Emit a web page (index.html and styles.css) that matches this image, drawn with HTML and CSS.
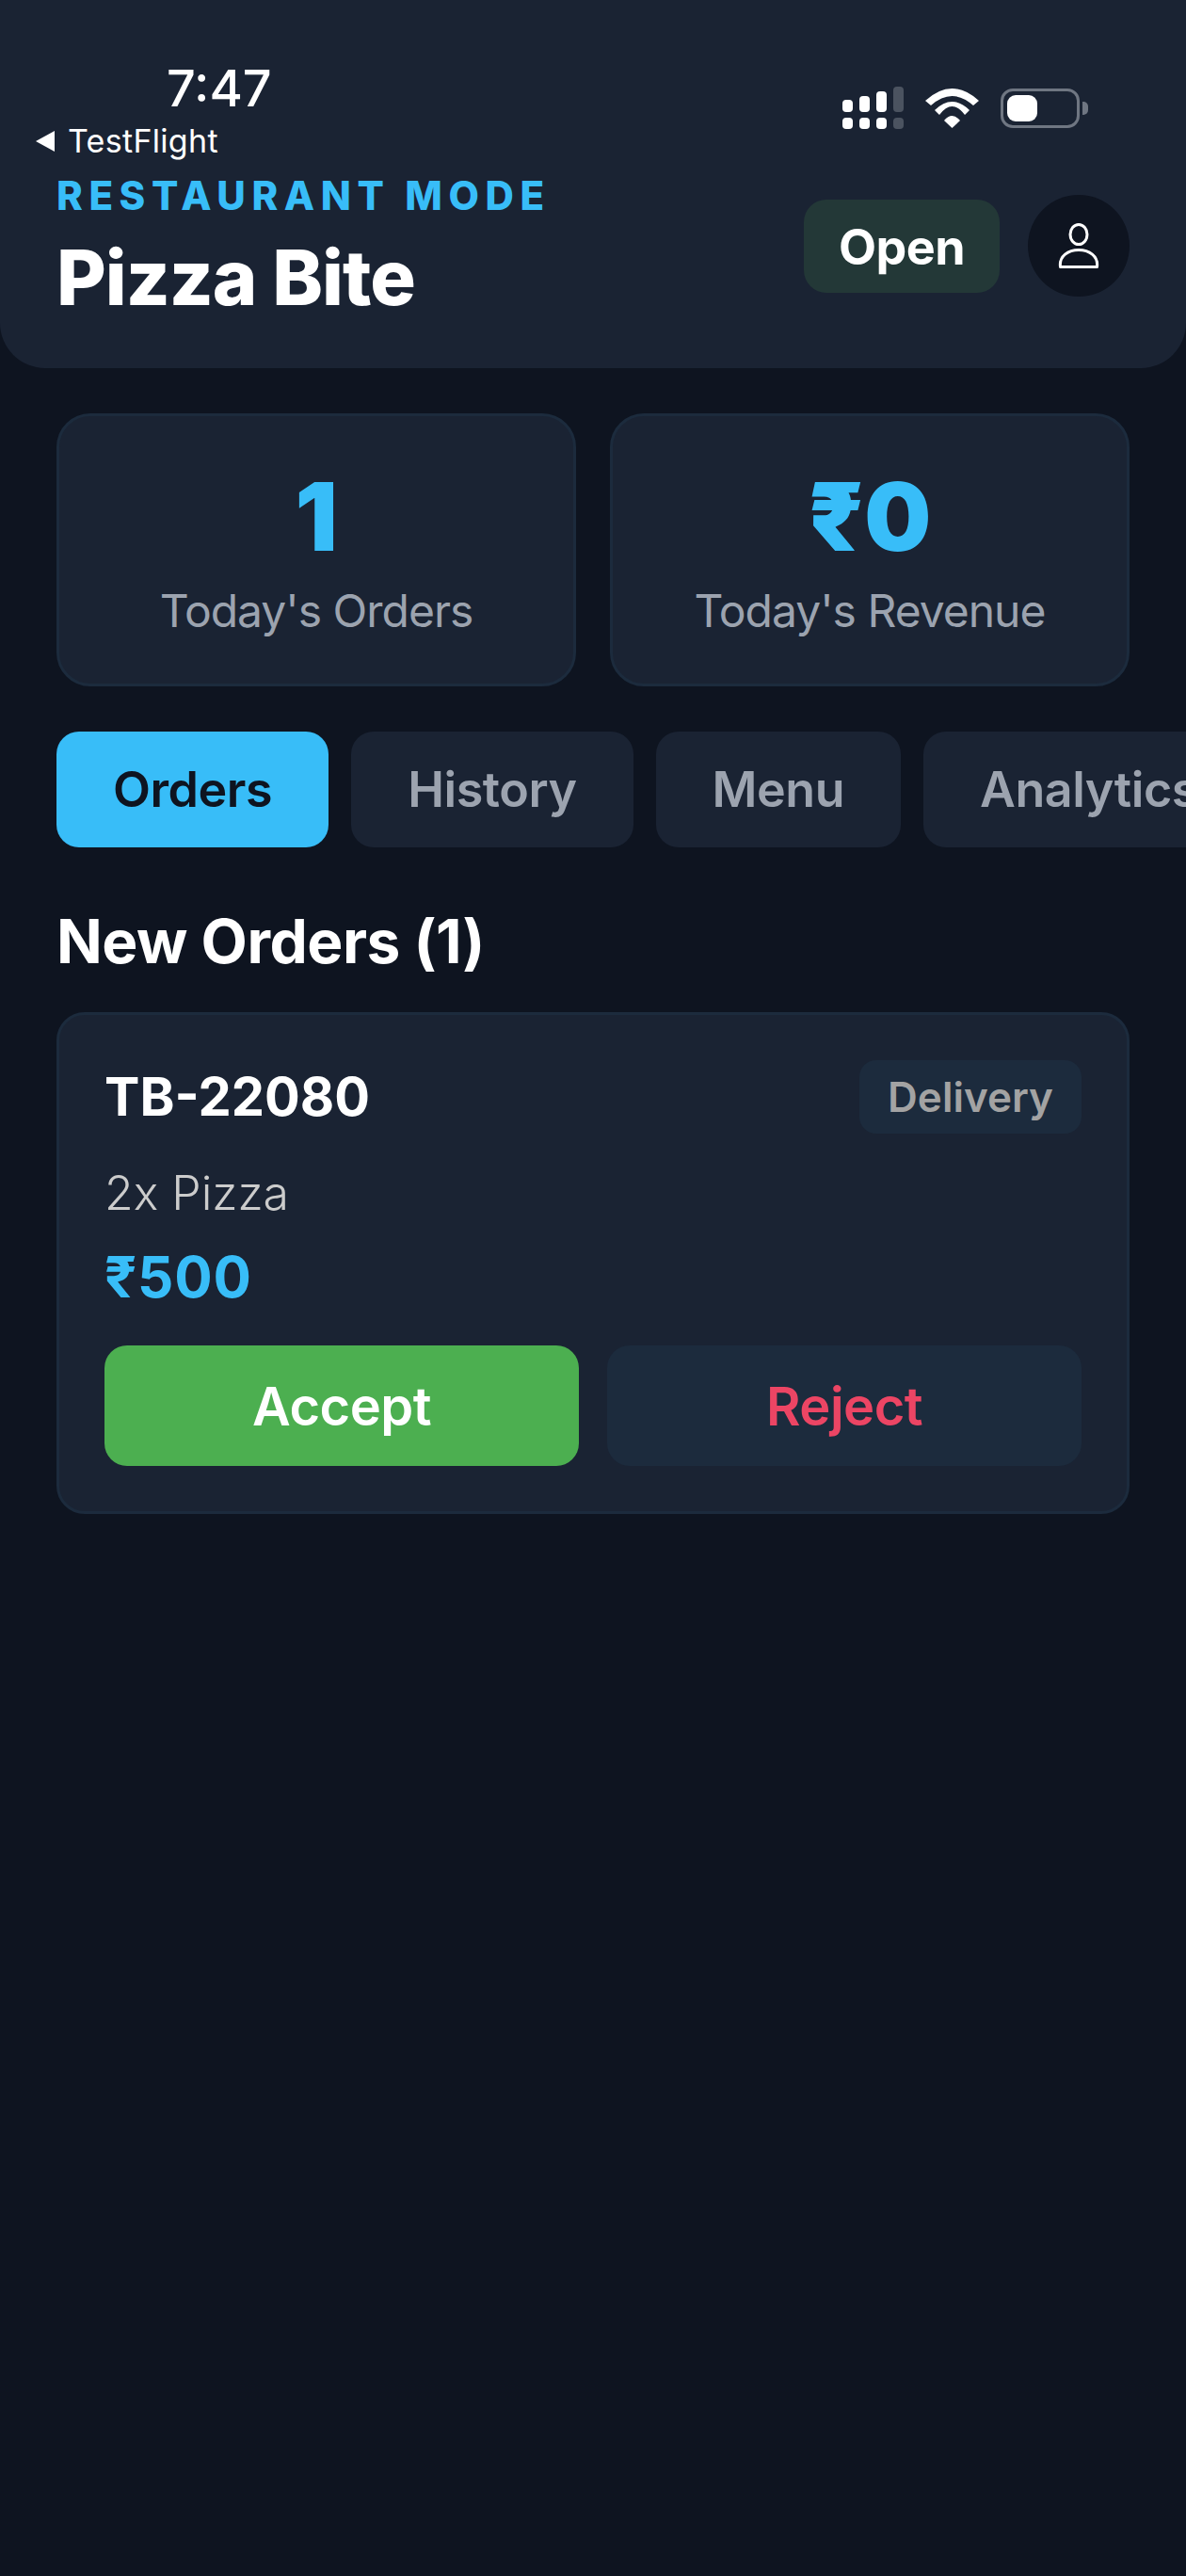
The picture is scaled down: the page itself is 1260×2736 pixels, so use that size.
FILE: index.html
```html
<!DOCTYPE html>
<html lang="en">
<head>
	<meta charset="utf-8">
	<title>Pizza Bite - Restaurant Mode</title>
	<link rel="stylesheet" href="styles.css">
</head>
<body>
	<header class="header">
		<div class="status-bar">
			<div class="status-left">
				<div class="clock">7:47</div>
				<div class="back-app"><span class="back-arrow"></span>TestFlight</div>
			</div>
			<div class="status-icons">
				<svg class="signal" width="65" height="45" viewBox="0 0 65 45">
					<g fill="#fff">
						<rect x="0" y="14" width="11" height="13" rx="4"/>
						<rect x="18" y="10" width="11" height="17" rx="4"/>
						<rect x="36" y="5" width="11" height="22" rx="4"/>
						<rect x="0" y="33" width="11" height="12" rx="4"/>
						<rect x="18" y="33" width="11" height="12" rx="4"/>
						<rect x="36" y="33" width="11" height="12" rx="4"/>
					</g>
					<g fill="#4b5360">
						<rect x="54" y="0" width="11" height="27" rx="4"/>
						<rect x="54" y="33" width="11" height="12" rx="4"/>
					</g>
				</svg>
				<svg class="wifi" width="57" height="42" viewBox="0 0 57 42" fill="#fff">
					<path d="M0 13Q28.500 -13 57 13L51 18Q28.500 -2 6 18Z"/>
					<path d="M10 23Q28.500 5 47 23L42 28Q28.500 10 15 28Z"/>
					<path d="M20 34Q28.500 24 37 34L28.500 42Z"/>
				</svg>
				<div class="battery">
					<div class="battery-body"><div class="battery-level"></div></div>
					<div class="battery-cap"></div>
				</div>
			</div>
		</div>
		<div class="header-main">
			<div class="header-title">
				<div class="mode-label">RESTAURANT MODE</div>
				<h1 class="restaurant-name">Pizza Bite</h1>
			</div>
			<div class="header-actions">
				<div class="open-badge">Open</div>
				<div class="avatar">
					<svg width="44" height="48" viewBox="0 0 44 48" fill="none" stroke="#fff" stroke-width="3">
						<ellipse cx="22" cy="12" rx="9" ry="10.500"/>
						<path d="M2.500 46.500C1 35 11 28.500 22 28.500S43 35 41.500 46.500Z" stroke-linejoin="round"/>
					</svg>
				</div>
			</div>
		</div>
	</header>

	<main class="content">
		<section class="stats">
			<div class="stat-card">
				<div class="stat-value">1</div>
				<div class="stat-label">Today's Orders</div>
			</div>
			<div class="stat-card">
				<div class="stat-value">₹0</div>
				<div class="stat-label">Today's Revenue</div>
			</div>
		</section>

		<nav class="tabs">
			<div class="tab tab-active">Orders</div>
			<div class="tab">History</div>
			<div class="tab">Menu</div>
			<div class="tab">Analytics</div>
		</nav>

		<h2 class="section-title">New Orders (1)</h2>

		<article class="order-card">
			<div class="order-top">
				<div class="order-id">TB-22080</div>
				<div class="order-type">Delivery</div>
			</div>
			<div class="order-items">2x Pizza</div>
			<div class="order-total">₹500</div>
			<div class="order-actions">
				<div class="btn btn-accept">Accept</div>
				<div class="btn btn-reject">Reject</div>
			</div>
		</article>
	</main>
</body>
</html>
```

FILE: styles.css
```css
* {
	box-sizing: border-box;
}
html, body {
	margin: 0;
	height: 100%;
}
body {
	width: 1260px;
	height: 2736px;
	overflow: hidden;
	background-color: #0e1420;
	font-family: Inter, "Noto Sans", sans-serif;
	color: #fff;
}

/* header */
.header {
	height: 391px;
	padding: 66px 60px 0 38px;
	background-color: #1a2333;
	border-radius: 0 0 48px 48px;
}
.status-bar {
	display: flex;
	justify-content: space-between;
	align-items: flex-start;
	height: 118px;
}
.clock {
	margin-left: 139px;
	font-size: 54px;
	line-height: 56px;
	font-weight: 500;
}
.back-app {
	display: flex;
	align-items: center;
	margin-top: 8px;
	font-size: 34px;
	line-height: 40px;
	letter-spacing: 0.300px;
}
.back-arrow {
	width: 0;
	height: 0;
	margin-right: 14px;
	border-top: 11px solid transparent;
	border-bottom: 11px solid transparent;
	border-right: 20px solid #fff;
}
.status-icons {
	display: flex;
	align-items: center;
	gap: 23px;
	margin-top: 26px;
	margin-right: 44px;
}
.battery {
	display: flex;
	align-items: center;
	gap: 3px;
}
.battery-body {
	width: 84px;
	height: 42px;
	padding: 4px;
	border: 3px solid #6f7682;
	border-radius: 13px;
}
.battery-level {
	width: 32px;
	height: 100%;
	background-color: #fff;
	border-radius: 9px;
}
.battery-cap {
	width: 6px;
	height: 14px;
	background-color: #6f7682;
	border-radius: 0 5px 5px 0;
}

.header-main {
	display: flex;
	justify-content: space-between;
	align-items: center;
	padding-left: 22px;
}
.mode-label {
	color: #38bdf8;
	font-size: 42px;
	line-height: 48px;
	font-weight: 800;
	letter-spacing: 6.600px;
}
.restaurant-name {
	margin: 21px 0 0;
	font-size: 81px;
	line-height: 84px;
	font-weight: 800;
	letter-spacing: -1px;
}
.header-actions {
	display: flex;
	align-items: center;
	gap: 30px;
}
.open-badge {
	width: 208px;
	height: 99px;
	margin-top: 2px;
	background-color: #233837;
	border-radius: 24px;
	font-size: 52px;
	line-height: 101px;
	font-weight: 700;
	letter-spacing: -0.500px;
	text-align: center;
}
.avatar {
	display: flex;
	justify-content: center;
	align-items: center;
	width: 108px;
	height: 108px;
	background-color: #0e1420;
	border-radius: 50%;
}

/* page content */
.content {
	padding: 48px 0 0 60px;
}
.stats {
	display: flex;
	gap: 36px;
	width: 1140px;
}
.stat-card {
	flex: 1;
	height: 290px;
	padding-top: 54px;
	background-color: #1a2333;
	border: 3px solid #1c2b3d;
	border-radius: 36px;
	text-align: center;
}
.stat-value {
	color: #38bdf8;
	font-size: 100px;
	line-height: 106px;
	font-weight: 900;
}
.stat-label {
	margin-top: 18px;
	color: #9ca3af;
	font-size: 48px;
	line-height: 58px;
	letter-spacing: -1px;
}

.tabs {
	display: flex;
	gap: 24px;
	margin-top: 48px;
	width: 1200px;
	overflow: hidden;
}
.tab {
	flex: none;
	height: 123px;
	padding: 0 60px;
	background-color: #1a2333;
	border-radius: 24px;
	color: #9ca3af;
	font-size: 52px;
	line-height: 123px;
	font-weight: 600;
	letter-spacing: -0.450px;
}
.tab-active {
	background-color: #38bdf8;
	color: #0e1420;
}

.section-title {
	margin: 60px 0 0;
	font-size: 64px;
	line-height: 80px;
	font-weight: 700;
	letter-spacing: -0.500px;
}

.order-card {
	width: 1140px;
	height: 533px;
	margin-top: 35px;
	padding: 48px;
	background-color: #1a2333;
	border: 3px solid #1c2b3d;
	border-radius: 30px;
}
.order-top {
	display: flex;
	justify-content: space-between;
	align-items: center;
}
.order-id {
	font-size: 56px;
	font-weight: 700;
}
.order-type {
	height: 78px;
	padding: 0 30px;
	background-color: #1c2b3d;
	border-radius: 18px;
	color: #a3a3a3;
	font-size: 44px;
	line-height: 78px;
	font-weight: 600;
}
.order-items {
	margin-top: 34px;
	color: #cccccc;
	font-size: 50px;
	line-height: 58px;
	font-weight: 300;
}
.order-total {
	margin-top: 25px;
	color: #38bdf8;
	font-size: 60px;
	line-height: 70px;
	font-weight: 700;
	letter-spacing: 0.800px;
}
.order-actions {
	display: flex;
	gap: 30px;
	margin-top: 38px;
}
.btn {
	flex: 1;
	height: 128px;
	border-radius: 24px;
	font-size: 56px;
	line-height: 130px;
	font-weight: 600;
	letter-spacing: -0.500px;
	text-align: center;
}
.btn-accept {
	background-color: #4caf50;
}
.btn-reject {
	background-color: #1c2b3d;
	color: #ec4564;
}
```
